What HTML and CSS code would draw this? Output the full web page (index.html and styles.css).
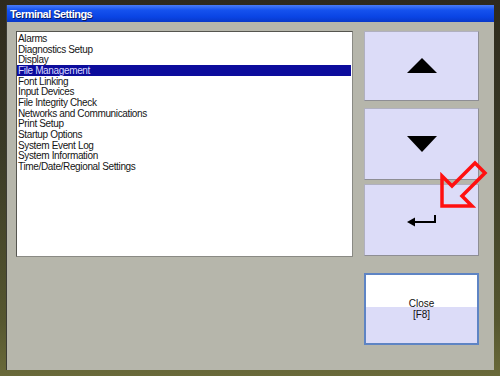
FILE: index.html
```html
<!DOCTYPE html>
<html lang="en">
<head>
    <meta charset="UTF-8">
    <title>Terminal Settings</title>
    <link rel="stylesheet" href="styles.css">
</head>
<body>
    <div class="window">
        <div class="titlebar">Terminal Settings</div>
        <div class="content">
            <ul class="list">
                <li>Alarms</li>
                <li>Diagnostics Setup</li>
                <li>Display</li>
                <li class="selected">File Management</li>
                <li>Font Linking</li>
                <li>Input Devices</li>
                <li>File Integrity Check</li>
                <li>Networks and Communications</li>
                <li>Print Setup</li>
                <li>Startup Options</li>
                <li>System Event Log</li>
                <li>System Information</li>
                <li>Time/Date/Regional Settings</li>
            </ul>
            <div class="buttons">
                <button class="btn up" type="button">
                    <svg width="30" height="16" viewBox="0 0 30 16"><polygon points="15,0 30,15 0,15" fill="#000"/></svg>
                </button>
                <button class="btn down" type="button">
                    <svg width="30" height="16" viewBox="0 0 30 16"><polygon points="0,0 30,0 15,16" fill="#000"/></svg>
                </button>
                <button class="btn enter" type="button">
                    <svg width="30" height="13" viewBox="0 0 30 13">
                        <path d="M28 1 V8 H6" fill="none" stroke="#000" stroke-width="2"/>
                        <polygon points="0,8 8,3.5 8,12.5" fill="#000"/>
                    </svg>
                </button>
                <button class="btn close" type="button">Close<br>[F8]</button>
            </div>
        </div>
    </div>

    <svg class="pointer" width="60" height="60" viewBox="436 156 60 60">
        <polygon points="442,206 442,176 452,186 475,163 485,173 462,196 472,206" fill="none" stroke="#ff1010" stroke-width="3.5" stroke-linejoin="miter"/>
    </svg>
</body>
</html>
```
FILE: styles.css
```css
body {
    margin: 0;
    width: 500px;
    height: 376px;
    overflow: hidden;
    position: relative;
    font-family: "Liberation Sans", Arial, sans-serif;
    background: linear-gradient(to bottom, #2e2a1c 0%, #3a3a26 40%, #55562f 85%, #6a6a3a 100%);
}
.window {
    margin: 5px 0 0 6px;
    width: 488px;
    height: 365px;
    background: #b6b6ab;
    border-left: 1px solid #3c3c34;
    box-sizing: border-box;
}
.titlebar {
    height: 17px;
    line-height: 18px;
    padding-left: 3px;
    font-size: 11px;
    font-weight: bold;
    letter-spacing: -0.55px;
    color: #fff;
    text-shadow: 1px 1px 0 #0a1a60;
    background: linear-gradient(to bottom, #4a7cf4 0%, #1552ee 30%, #0a44e4 70%, #0838c8 100%);
}
.content {
    display: flex;
    padding: 9px 0 0 9px;
}
.list {
    list-style: none;
    margin: 0;
    padding: 1px 0 0;
    width: 337px;
    height: 226px;
    box-sizing: border-box;
    background: #fff;
    border: 1px solid #8a8a84;
    border-top-color: #55554f;
    border-left-color: #55554f;
}
.list li {
    height: 10.67px;
    line-height: 11.5px;
    font-size: 10px;
    letter-spacing: -0.35px;
    color: #151515;
    padding-left: 1px;
    white-space: nowrap;
}
.list li.selected {
    background: #0c0c9c;
    color: #d8d8ff;
    margin-right: 1px;
}
.buttons {
    display: flex;
    flex-direction: column;
    margin-left: 11px;
    width: 115px;
}
.btn {
    display: flex;
    align-items: center;
    justify-content: center;
    padding: 0;
    background: #dcdcf8;
    border: 1px solid #b0b0c0;
    border-right-color: #8e8e94;
    border-bottom-color: #8e8e94;
    cursor: pointer;
}
.up { height: 70px; }
.down { height: 72px; margin-top: 7px; }
.enter { height: 72px; margin-top: 4px; }
.close {
    height: 72px;
    margin-top: 17px;
    border: 2px solid #5e84c4;
    background: linear-gradient(to bottom, #ffffff 0%, #ffffff 47%, #dcdcf8 47%, #dcdcf8 100%);
    font-family: "Liberation Sans", Arial, sans-serif;
    font-size: 10px;
    line-height: 11px;
    color: #111;
    text-align: center;
}
.pointer {
    position: absolute;
    left: 436px;
    top: 156px;
}
```
